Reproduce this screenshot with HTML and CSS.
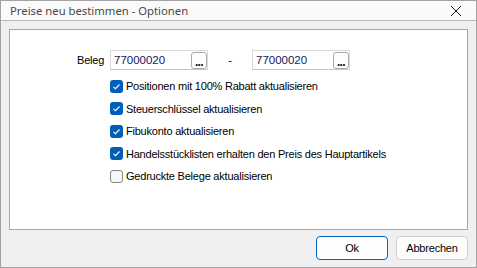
FILE: index.html
```html
<!DOCTYPE html>
<html>
<head>
<meta charset="utf-8">
<link rel="stylesheet" href="styles.css">
</head>
<body>
<div class="window">
  <div class="titlebar">
    <span class="title">Preise neu bestimmen - Optionen</span>
    <svg class="close" width="12" height="12" viewBox="0 0 12 12"><path d="M1 1L11 11M11 1L1 11" stroke="#1a1a1a" stroke-width="1"/></svg>
  </div>
  <div class="content">
    <div class="panel">
      <div class="beleg-row">
        <span class="label">Beleg</span>
        <div class="field"><span class="value">77000020</span><span class="dots">...</span></div>
        <span class="dash">-</span>
        <div class="field"><span class="value">77000020</span><span class="dots">...</span></div>
      </div>
      <div class="checks">
        <div class="check"><span class="box on"><svg width="13" height="13" viewBox="0 0 13 13"><path d="M3.5 6.8L5.5 8.7L9.5 4.5" fill="none" stroke="#fff" stroke-width="1.1"/></svg></span><span>Positionen mit 100% Rabatt aktualisieren</span></div>
        <div class="check"><span class="box on"><svg width="13" height="13" viewBox="0 0 13 13"><path d="M3.5 6.8L5.5 8.7L9.5 4.5" fill="none" stroke="#fff" stroke-width="1.1"/></svg></span><span>Steuerschlüssel aktualisieren</span></div>
        <div class="check"><span class="box on"><svg width="13" height="13" viewBox="0 0 13 13"><path d="M3.5 6.8L5.5 8.7L9.5 4.5" fill="none" stroke="#fff" stroke-width="1.1"/></svg></span><span>Fibukonto aktualisieren</span></div>
        <div class="check"><span class="box on"><svg width="13" height="13" viewBox="0 0 13 13"><path d="M3.5 6.8L5.5 8.7L9.5 4.5" fill="none" stroke="#fff" stroke-width="1.1"/></svg></span><span>Handelsstücklisten erhalten den Preis des Hauptartikels</span></div>
        <div class="check"><span class="box off"></span><span>Gedruckte Belege aktualisieren</span></div>
      </div>
    </div>
    <div class="footer">
      <button class="btn primary">Ok</button>
      <button class="btn">Abbrechen</button>
    </div>
  </div>
</div>
</body>
</html>
```
FILE: styles.css
```css
html, body { margin: 0; padding: 0; }
body { width: 477px; height: 268px; overflow: hidden; background: #f0f0f0; }
.window {
  width: 477px; height: 268px; box-sizing: border-box;
  border: 1px solid #a3a3a3;
  display: flex; flex-direction: column;
  font-family: "Liberation Sans", Arial, sans-serif;
  font-size: 11px; color: #000;
}
.titlebar {
  height: 29px; background: #fafafa; border-bottom: 1px solid #b9b9b9;
  display: flex; align-items: center; justify-content: space-between;
  padding: 0 14px 0 9px;
}
.title { font-family: "Noto Sans", "Open Sans", sans-serif; font-size: 11.3px; color: #4a4a4a; }
.close { display: block; }
.content {
  flex: 1; background: #f0f0f0; padding: 8px 8px 7px 8px;
  display: flex; flex-direction: column;
}
.panel {
  height: 179px; background: #fff; border: 1px solid #a7a7a7;
  padding: 20px 0 0 67px;
}
.beleg-row { display: flex; align-items: center; height: 20px; }
.label { width: 26px; margin-right: 7px; letter-spacing: -0.2px; }
.field {
  width: 96px; height: 18px; border: 1px solid #dadada; border-bottom-color: #c4c4c4;
  display: flex; align-items: center; justify-content: space-between; background: #fff;
}
.value { padding-left: 3px; color: #17175e; font-size: 11.5px; }
.dots {
  width: 14px; height: 15px; border: 1px solid #a9a9a9; border-radius: 3px; margin-right: 0;
  font-weight: bold; font-size: 12px; line-height: 18px; text-align: center; background: #fdfdfd;
  letter-spacing: -0.6px; overflow: hidden; color: #111;
}
.dash { width: 44px; text-align: center; }
.checks { display: flex; flex-direction: column; padding-top: 5px; }
.check { display: flex; align-items: center; height: 22.5px; letter-spacing: -0.22px; }
.box {
  width: 13px; height: 13px; box-sizing: border-box; border-radius: 3px; margin-left: 33px; margin-right: 3px;
  display: flex;
}
.box.on { background: #005fb8; }
.box.off { border: 1px solid #858585; background: #f7f7f7; }
.footer { display: flex; justify-content: flex-end; gap: 8px; padding-top: 6px; }
.btn {
  width: 72px; height: 24px; box-sizing: border-box; margin: 0;
  font-family: "Liberation Sans", Arial, sans-serif; font-size: 11px; color: #000;
  background: #fdfdfd; border: 1px solid #d0d0d0; border-radius: 4px; padding: 0;
  letter-spacing: -0.2px;
}
.btn.primary { border-color: #0067c0; }
```
